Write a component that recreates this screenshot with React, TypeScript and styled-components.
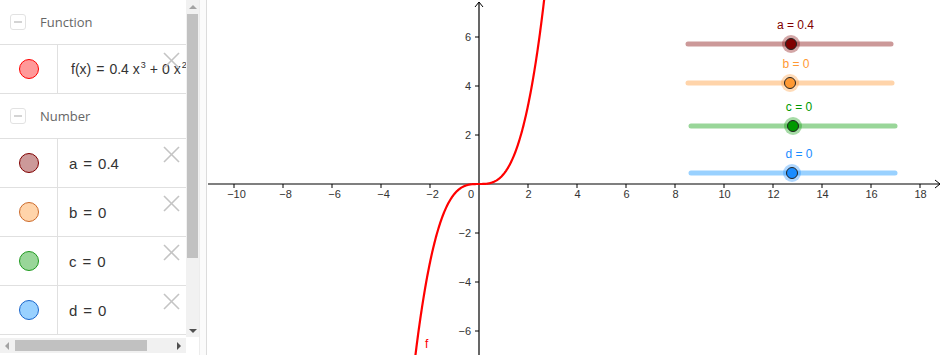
import React from 'react';
import styled, { createGlobalStyle } from 'styled-components';

const GlobalStyle = createGlobalStyle`
  html, body {
    margin: 0;
    padding: 0;
    background: #fff;
  }
  body {
    font-family: 'Liberation Sans', Arial, sans-serif;
  }
`;

const Layout = styled.div`
  display: flex;
  width: 945px;
  height: 355px;
  overflow: hidden;
  background: #fff;
`;

const AlgebraPanel = styled.div`
  display: grid;
  grid-template-columns: 186px 13px;
  grid-template-rows: 337px 18px;
  width: 199px;
  height: 355px;
  flex-shrink: 0;
`;

const ListArea = styled.div`
  overflow: hidden;
  display: flex;
  flex-direction: column;
`;

const Header = styled.div`
  display: flex;
  align-items: center;
  height: 44px;
  flex-shrink: 0;
  padding-left: 10px;
  border-bottom: 1px solid #e0e0e0;
`;

const HeaderToggle = styled.div`
  width: 14px;
  height: 14px;
  border: 1px solid #e2e2e2;
  border-radius: 3px;
  display: flex;
  align-items: center;
  justify-content: center;
  margin-right: 14px;

  &::after {
    content: '';
    width: 8px;
    height: 2px;
    background: #d4d4d4;
  }
`;

const HeaderLabel = styled.span`
  font-family: 'Open Sans', 'Liberation Sans', sans-serif;
  font-size: 13px;
  color: #666;
`;

const ItemRow = styled.div`
  position: relative;
  display: flex;
  height: 48px;
  flex-shrink: 0;
  border-bottom: 1px solid #e0e0e0;
`;

const MarbleCell = styled.div`
  width: 56px;
  flex-shrink: 0;
  border-right: 1px solid #e0e0e0;
  display: flex;
  align-items: center;
  justify-content: center;
  padding-left: 1px;
`;

const Marble = styled.div<{ $fill: string; $stroke: string }>`
  width: 18px;
  height: 18px;
  border-radius: 50%;
  background: ${({ $fill }) => $fill};
  border: 1px solid ${({ $stroke }) => $stroke};
`;

const ItemText = styled.div<{ $indent: number; $size: number }>`
  display: flex;
  align-items: center;
  padding-left: ${({ $indent }) => $indent}px;
  font-size: ${({ $size }) => $size}px;
  color: #333;
  white-space: nowrap;

  sup {
    font-size: 9px;
    position: relative;
    top: -4px;
    margin-left: 1px;
  }
`;

const Eq = styled.span<{ $gap: number }>`
  margin: 0 ${({ $gap }) => $gap}px;
`;

const DeleteButton = styled.svg`
  position: absolute;
  left: 163px;
  top: 7px;
  width: 17px;
  height: 17px;
`;

const VScroll = styled.div`
  background: #f1f1f1;
  display: flex;
  flex-direction: column;
  align-items: center;
  padding: 0 1px;
`;

const ArrowUp = styled.div`
  margin-top: 5px;
  width: 0;
  height: 0;
  border-left: 4px solid transparent;
  border-right: 4px solid transparent;
  border-bottom: 4px solid #a3a3a3;
`;

const ArrowDown = styled.div`
  margin-top: auto;
  margin-bottom: 4px;
  width: 0;
  height: 0;
  border-left: 4px solid transparent;
  border-right: 4px solid transparent;
  border-top: 4px solid #505050;
`;

const VThumb = styled.div`
  margin-top: 5px;
  width: 11px;
  height: 244px;
  background: #c1c1c1;
`;

const HScroll = styled.div`
  background: #f1f1f1;
  display: flex;
  align-items: center;
  padding: 0 5px;
  margin-top: 1px;
  margin-bottom: 2px;
`;

const ArrowLeft = styled.div`
  width: 0;
  height: 0;
  border-top: 4px solid transparent;
  border-bottom: 4px solid transparent;
  border-right: 4px solid #a3a3a3;
`;

const ArrowRight = styled.div`
  margin-left: auto;
  width: 0;
  height: 0;
  border-top: 4px solid transparent;
  border-bottom: 4px solid transparent;
  border-left: 4px solid #505050;
`;

const HThumb = styled.div`
  margin-left: 6px;
  width: 132px;
  height: 11px;
  background: #c1c1c1;
`;

const Corner = styled.div`
  background: #fff;
`;

const Gutter = styled.div`
  width: 8px;
  flex-shrink: 0;
  border-left: 1px solid #ececec;
  border-right: 1px solid #dcdcdc;
  background: #fbfbfb;
  box-sizing: border-box;
`;

const GraphView = styled.svg`
  display: block;
  width: 738px;
  height: 355px;
  flex-shrink: 0;
  font-family: 'Liberation Sans', Arial, sans-serif;
`;

const OX = 479;
const OY = 184;
const UNIT = 24.5;

const toX = (v: number) => OX + v * UNIT;
const toY = (v: number) => OY - v * UNIT;

const curvePath = (() => {
  const pts: string[] = [];
  for (let i = 0; i <= 300; i++) {
    const x = -2.7 + (5.4 * i) / 300;
    const y = 0.4 * x * x * x;
    pts.push(`${toX(x).toFixed(2)},${toY(y).toFixed(2)}`);
  }
  return 'M' + pts.join(' L');
})();

type Slider = {
  label: string;
  x1: number;
  x2: number;
  y: number;
  px: number;
  track: string;
  point: string;
  text: string;
};

const sliders: Slider[] = [
  { label: 'a = 0.4', x1: 688, x2: 891, y: 44, px: 791, track: '#cc9999', point: '#800000', text: '#800000' },
  { label: 'b = 0', x1: 688, x2: 892, y: 83, px: 790, track: '#ffd4aa', point: '#ff9933', text: '#ff9933' },
  { label: 'c = 0', x1: 691, x2: 895, y: 126, px: 793, track: '#99d699', point: '#009900', text: '#009900' },
  { label: 'd = 0', x1: 691, x2: 895, y: 173, px: 792, track: '#99d1ff', point: '#1a8cff', text: '#1a8cff' },
];

const xTicks = [-10, -8, -6, -4, -2, 2, 4, 6, 8, 10, 12, 14, 16, 18];
const yTicks = [6, 4, 2, -2, -4, -6];

const fmt = (n: number) => (n < 0 ? '\u2212' + Math.abs(n) : String(n));

const Graph = () => (
  <GraphView viewBox="207 0 738 355">
    {/* axes */}
    <line x1={208} y1={OY} x2={940} y2={OY} stroke="#000" strokeWidth={1.2} />
    <polyline points="935,180 940,184 935,188" fill="none" stroke="#000" strokeWidth={1} />
    <line x1={OX} y1={355} x2={OX} y2={2} stroke="#000" strokeWidth={1.2} />
    <polyline points="475,7 479,2 483,7" fill="none" stroke="#000" strokeWidth={1} />

    {xTicks.map((t) => (
      <g key={'x' + t}>
        <line x1={toX(t)} y1={OY} x2={toX(t)} y2={OY + 4} stroke="#000" strokeWidth={1} />
        <text x={toX(t) + (t < 0 ? 2.5 : 0.5)} y={198} fontSize={11} fill="#333" textAnchor="middle">
          {fmt(t)}
        </text>
      </g>
    ))}
    <text x={471} y={198} fontSize={11} fill="#333" textAnchor="middle">
      0
    </text>

    {yTicks.map((t) => (
      <g key={'y' + t}>
        <line x1={OX - 4} y1={toY(t)} x2={OX} y2={toY(t)} stroke="#000" strokeWidth={1} />
        <text x={471} y={toY(t) + 4} fontSize={11} fill="#333" textAnchor="end">
          {fmt(t)}
        </text>
      </g>
    ))}

    {/* f(x) = 0.4x^3 */}
    <path d={curvePath} fill="none" stroke="#ff0000" strokeWidth={2.2} strokeLinejoin="round" />
    <text x={425} y={348} fontSize={12} fill="#ff0000">
      f
    </text>

    {/* sliders */}
    {sliders.map((s) => (
      <g key={s.label}>
        <text x={(s.x1 + s.x2) / 2 + 6} y={s.y - 15} fontSize={12} fill={s.text} textAnchor="middle">
          {s.label}
        </text>
        <line x1={s.x1} y1={s.y} x2={s.x2} y2={s.y} stroke={s.track} strokeWidth={5} strokeLinecap="round" />
        <circle cx={s.px} cy={s.y} r={9} fill={s.point} opacity={0.35} />
        <circle cx={s.px} cy={s.y} r={5.5} fill={s.point} stroke="#222" strokeWidth={1} />
      </g>
    ))}
  </GraphView>
);

const DeleteIcon = () => (
  <DeleteButton viewBox="0 0 17 17">
    <line x1={1} y1={1} x2={16} y2={16} stroke="#c4c4c4" strokeWidth={1.6} />
    <line x1={16} y1={1} x2={1} y2={16} stroke="#c4c4c4" strokeWidth={1.6} />
  </DeleteButton>
);

type NumberItem = { name: string; value: string; fill: string; stroke: string };

const numbers: NumberItem[] = [
  { name: 'a', value: '0.4', fill: '#cc9999', stroke: '#800000' },
  { name: 'b', value: '0', fill: '#ffd4aa', stroke: '#cc6a2a' },
  { name: 'c', value: '0', fill: '#99d699', stroke: '#1f9a1f' },
  { name: 'd', value: '0', fill: '#99d1ff', stroke: '#1a66cc' },
];

const AlgebraView = () => (
  <AlgebraPanel>
    <ListArea>
      <Header>
        <HeaderToggle />
        <HeaderLabel>Function</HeaderLabel>
      </Header>
      <ItemRow>
        <MarbleCell>
          <Marble $fill="#ff9999" $stroke="#ff0000" />
        </MarbleCell>
        <ItemText $indent={13} $size={14}>
          f(x)<Eq $gap={5}>=</Eq>0.4 x<sup>3</sup>
          <Eq $gap={4}>+</Eq>0 x<sup>2</sup>
        </ItemText>
        <DeleteIcon />
      </ItemRow>
      <Header>
        <HeaderToggle />
        <HeaderLabel>Number</HeaderLabel>
      </Header>
      {numbers.map((n) => (
        <ItemRow key={n.name}>
          <MarbleCell>
            <Marble $fill={n.fill} $stroke={n.stroke} />
          </MarbleCell>
          <ItemText $indent={11} $size={15}>
            {n.name}
            <Eq $gap={6}>=</Eq>
            {n.value}
          </ItemText>
          <DeleteIcon />
        </ItemRow>
      ))}
    </ListArea>
    <VScroll>
      <ArrowUp />
      <VThumb />
      <ArrowDown />
    </VScroll>
    <HScroll>
      <ArrowLeft />
      <HThumb />
      <ArrowRight />
    </HScroll>
    <Corner />
  </AlgebraPanel>
);

export default function App() {
  return (
    <>
      <GlobalStyle />
      <Layout>
        <AlgebraView />
        <Gutter />
        <Graph />
      </Layout>
    </>
  );
}
